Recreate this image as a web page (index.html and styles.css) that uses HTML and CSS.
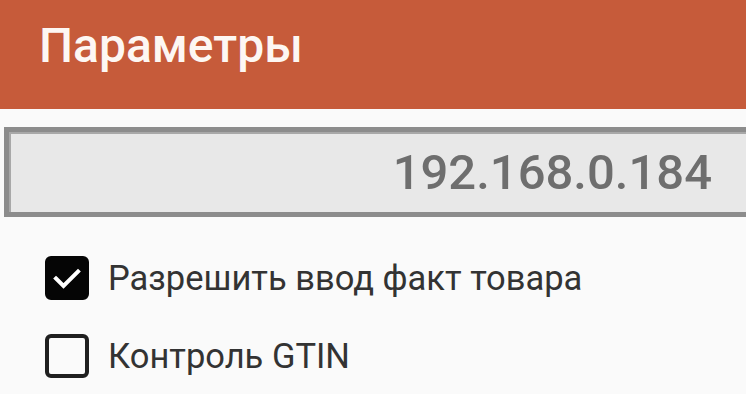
FILE: index.html
```html
<!DOCTYPE html>
<html lang="ru">
<head>
<meta charset="utf-8">
<title>Параметры</title>
<link rel="stylesheet" href="styles.css">
</head>
<body>
<header class="toolbar">
  <h1 class="title">Параметры</h1>
</header>
<main class="content">
  <div class="field">
    <span class="field-value">192.168.0.184</span>
  </div>
  <ul class="options">
    <li class="option">
      <span class="box checked">
        <svg viewBox="0 0 44 44" width="44" height="44"><path d="M11 22.5 L18.5 30 L33 15.5" fill="none" stroke="#fff" stroke-width="4" stroke-linecap="square"/></svg>
      </span>
      <span class="label">Разрешить ввод факт товара</span>
    </li>
    <li class="option">
      <span class="box"></span>
      <span class="label">Контроль GTIN</span>
    </li>
  </ul>
</main>
</body>
</html>
```
FILE: styles.css
```css
html, body {
  margin: 0;
  padding: 0;
}
body {
  width: 746px;
  height: 394px;
  overflow: hidden;
  background: #fafafa;
  font-family: Roboto, "Liberation Sans", sans-serif;
}
.toolbar {
  height: 109px;
  background: #c65b3a;
  display: flex;
  align-items: center;
  padding-left: 39px;
  box-sizing: border-box;
}
.title {
  margin: 0;
  color: #fdf7f3;
  font-size: 48px;
  font-weight: 500;
  line-height: 1;
  padding-bottom: 18px;
}
.content {
  padding-top: 18px;
}
.field {
  margin-left: 4px;
  width: 770px;
  height: 90px;
  box-sizing: border-box;
  border: 5px solid #8c8c8c;
  background: #e8e8e8;
  box-shadow: inset 2px 2px 0 #a8a8a8;
  display: flex;
  align-items: center;
  justify-content: flex-end;
  padding-right: 57px;
}
.field-value {
  color: #6e6e6e;
  font-size: 49px;
  font-weight: 500;
  line-height: 1;
}
.options {
  list-style: none;
  margin: 0;
  padding: 39px 0 0 45px;
  display: flex;
  flex-direction: column;
  gap: 34px;
}
.option {
  display: flex;
  align-items: center;
  gap: 19px;
  height: 44px;
}
.box {
  width: 44px;
  height: 44px;
  box-sizing: border-box;
  border: 4px solid #1f1f1f;
  border-radius: 6px;
  flex: none;
  display: flex;
}
.box.checked {
  background: #050505;
  border-color: #050505;
}
.box.checked svg {
  margin: -4px;
}
.label {
  color: #333333;
  font-size: 34.5px;
  line-height: 1;
}
```
